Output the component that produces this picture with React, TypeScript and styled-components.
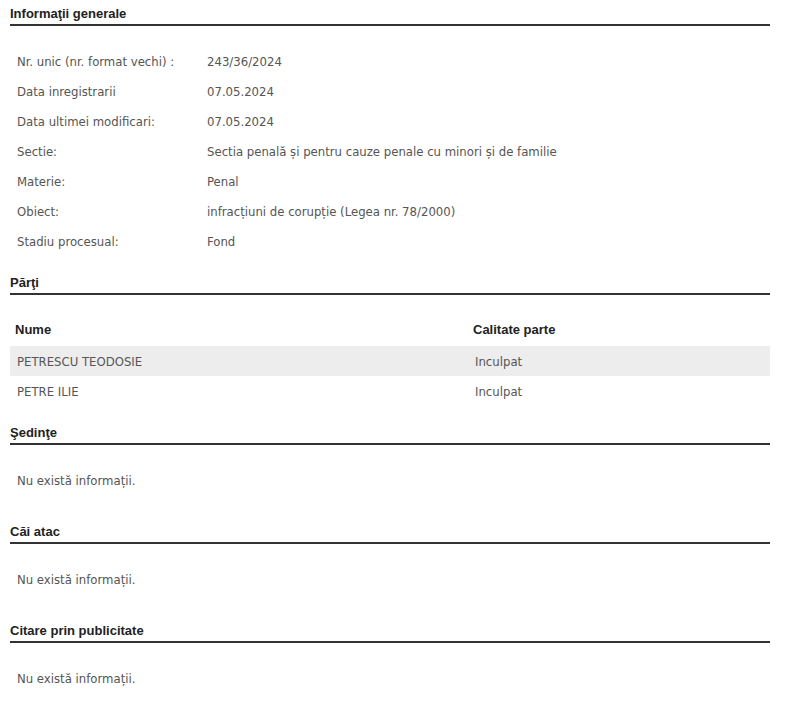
import React from "react";
import styled, { createGlobalStyle } from "styled-components";

const Global = createGlobalStyle`
  html, body { margin: 0; padding: 0; background: #fff; }
  body { font-family: "DejaVu Sans Condensed", "DejaVu Sans", sans-serif; }
`;

const Page = styled.div`
  width: 760px;
  padding: 0 0 20px 10px;
  display: flex;
  flex-direction: column;
`;

const Section = styled.section`
  display: flex;
  flex-direction: column;
  margin-bottom: 13px;
`;

const Heading = styled.h2`
  margin: 0;
  padding: 6px 0 2px 0;
  font-family: "Liberation Sans", Arial, sans-serif;
  font-size: 13px;
  line-height: 16px;
  font-weight: bold;
  color: #222;
  border-bottom: 2px solid #333;
`;

const InfoList = styled.div`
  display: flex;
  flex-direction: column;
  margin-top: 20px;
`;

const InfoRow = styled.div`
  display: grid;
  grid-template-columns: 190px 1fr;
  height: 30px;
  align-items: center;
  padding-left: 7px;
  font-size: 13px;
  color: #555;
`;

const Table = styled.table`
  margin: 21px 0 0 0;
  width: 100%;
  border-collapse: collapse;
  font-size: 13px;
`;

const Th = styled.th<{ $w?: string }>`
  text-align: left;
  font-family: "Liberation Sans", Arial, sans-serif;
  font-weight: bold;
  color: #222;
  height: 27px;
  padding: 0 0 3px 5px;
  width: ${(p) => p.$w || "auto"};
`;

const Tr = styled.tr<{ $shaded?: boolean }>`
  background: ${(p) => (p.$shaded ? "#ededed" : "transparent")};
`;

const Td = styled.td`
  height: 30px;
  padding: 0 0 0 7px;
  color: #555;
`;

const Empty = styled.div`
  margin: 20px 0 10px 0;
  height: 30px;
  display: flex;
  align-items: center;
  padding-left: 7px;
  font-size: 13px;
  color: #555;
`;

const info: [string, string][] = [
  ["Nr. unic (nr. format vechi) :", "243/36/2024"],
  ["Data inregistrarii", "07.05.2024"],
  ["Data ultimei modificari:", "07.05.2024"],
  ["Sectie:", "Sectia penală și pentru cauze penale cu minori și de familie"],
  ["Materie:", "Penal"],
  ["Obiect:", "infracțiuni de corupție (Legea nr. 78/2000)"],
  ["Stadiu procesual:", "Fond"],
];

const parti = [
  ["PETRESCU TEODOSIE", "Inculpat"],
  ["PETRE ILIE", "Inculpat"],
];

export default function App() {
  return (
    <>
      <Global />
      <Page>
        <Section>
          <Heading>Informaţii generale</Heading>
          <InfoList>
            {info.map(([k, v]) => (
              <InfoRow key={k}>
                <span>{k}</span>
                <span>{v}</span>
              </InfoRow>
            ))}
          </InfoList>
        </Section>
        <Section>
          <Heading>Părţi</Heading>
          <Table>
            <thead>
              <tr>
                <Th $w="453px">Nume</Th>
                <Th>Calitate parte</Th>
              </tr>
            </thead>
            <tbody>
              {parti.map(([n, c], i) => (
                <Tr key={n} $shaded={i === 0}>
                  <Td>{n}</Td>
                  <Td>{c}</Td>
                </Tr>
              ))}
            </tbody>
          </Table>
        </Section>
        <Section>
          <Heading>Şedinţe</Heading>
          <Empty>Nu există informații.</Empty>
        </Section>
        <Section>
          <Heading>Căi atac</Heading>
          <Empty>Nu există informații.</Empty>
        </Section>
        <Section>
          <Heading>Citare prin publicitate</Heading>
          <Empty>Nu există informații.</Empty>
        </Section>
      </Page>
    </>
  );
}
